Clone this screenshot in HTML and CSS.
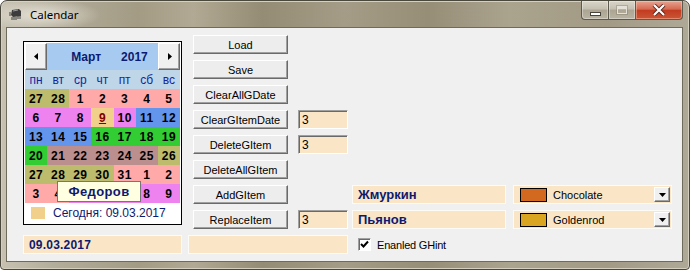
FILE: index.html
```html
<!DOCTYPE html>
<html lang="ru">
<head>
    <meta charset="UTF-8">
    <title>Calendar</title>
    <link rel="stylesheet" href="styles.css">
</head>
<body>

    <div id="window">

        <div id="titlebar">
            <svg class="app-icon" width="14" height="13" viewBox="0 0 14 13">
                <path d="M3 2 L10 1 L12 3 L12 8 L4 9 L2 7 Z" fill="#3c3c3c"/>
                <path d="M3 9 L3 12 M5 9 L5 12 M7 9 L7 12 M9 8 L9 11 M11 8 L11 11 M1 4 L1 8" stroke="#3c3c3c" stroke-width="1"/>
                <path d="M4 3 L9 2" stroke="#9a9a9a" stroke-width="1"/>
            </svg>
            <span class="title">Calendar</span>
            <div class="caption-buttons">
                <div class="cap-btn cap-min"><span class="min-bar"></span></div>
                <div class="cap-btn cap-max"><span class="max-box"></span></div>
                <div class="cap-btn cap-close">
                    <svg width="14" height="12" viewBox="0 0 14 12">
                        <path d="M2 1 L12 11 M12 1 L2 11" stroke="#5a2a20" stroke-width="4"/>
                        <path d="M2 1 L12 11 M12 1 L2 11" stroke="#fff" stroke-width="2.2"/>
                    </svg>
                </div>
            </div>
        </div>

        <div id="client">

            <div class="left-col">
                <div id="calendar">
                    <div class="cal-head">
                        <button class="cal-nav" type="button">
                            <svg width="5" height="7" viewBox="0 0 5 7"><path d="M4 0 L4 7 L0 3.5 Z" fill="#000"/></svg>
                        </button>
                        <div class="cal-month"><span>Март</span><span>2017</span></div>
                        <button class="cal-nav" type="button">
                            <svg width="5" height="7" viewBox="0 0 5 7"><path d="M1 0 L1 7 L5 3.5 Z" fill="#000"/></svg>
                        </button>
                    </div>
                    <div class="cal-days">
                        <span>пн</span><span>вт</span><span>ср</span><span>чт</span><span>пт</span><span>сб</span><span>вс</span>
                    </div>
                    <div class="cal-grid">
                        <span class="khaki">27</span><span class="khaki">28</span><span class="pink">1</span><span class="pink">2</span><span class="pink">3</span><span class="pink">4</span><span class="pink">5</span>
                        <span class="violet">6</span><span class="violet">7</span><span class="violet">8</span><span class="today">9</span><span class="violet">10</span><span class="blue">11</span><span class="blue">12</span>
                        <span class="blue">13</span><span class="blue">14</span><span class="blue">15</span><span class="green">16</span><span class="green">17</span><span class="green">18</span><span class="green">19</span>
                        <span class="green">20</span><span class="rosy">21</span><span class="rosy">22</span><span class="rosy">23</span><span class="rosy">24</span><span class="rosy">25</span><span class="khaki">26</span>
                        <span class="khaki">27</span><span class="khaki">28</span><span class="khaki">29</span><span class="khaki">30</span><span class="pink">31</span><span class="pink">1</span><span class="pink">2</span>
                        <span class="pink">3</span><span class="pink">4</span><span class="violet">5</span><span class="violet">6</span><span class="violet">7</span><span class="violet">8</span><span class="violet">9</span>
                    </div>
                    <div class="cal-today">
                        <span class="today-swatch"></span>
                        <span>Сегодня: 09.03.2017</span>
                    </div>
                    <!-- hint shown over the hovered day -->
                    <div class="hint">Федоров</div>
                </div>
                <div class="edit edit-flat edit-date">09.03.2017</div>
            </div>

            <div class="mid-col">
                <div class="btn-row"><button class="btn" type="button">Load</button></div>
                <div class="btn-row"><button class="btn" type="button">Save</button></div>
                <div class="btn-row"><button class="btn" type="button">ClearAllGDate</button></div>
                <div class="btn-row">
                    <button class="btn" type="button">ClearGItemDate</button>
                    <div class="edit edit-sunken">3</div>
                </div>
                <div class="btn-row">
                    <button class="btn" type="button">DeleteGItem</button>
                    <div class="edit edit-sunken">3</div>
                </div>
                <div class="btn-row"><button class="btn" type="button">DeleteAllGItem</button></div>
                <div class="btn-row"><button class="btn" type="button">AddGItem</button></div>
                <div class="btn-row">
                    <button class="btn" type="button">ReplaceItem</button>
                    <div class="edit edit-sunken">3</div>
                </div>
                <div class="edit edit-flat edit-wide"></div>
            </div>

            <div class="right-col">
                <div class="field-row">
                    <div class="edit edit-flat edit-name">Жмуркин</div>
                    <div class="combo">
                        <span class="combo-swatch" style="background: #d2691e;"></span>
                        <span class="combo-text">Chocolate</span>
                        <span class="combo-drop">
                            <svg width="7" height="4" viewBox="0 0 7 4"><path d="M0 0 L7 0 L3.5 4 Z" fill="#000"/></svg>
                        </span>
                    </div>
                </div>
                <div class="field-row">
                    <div class="edit edit-flat edit-name">Пьянов</div>
                    <div class="combo">
                        <span class="combo-swatch" style="background: #daa520;"></span>
                        <span class="combo-text">Goldenrod</span>
                        <span class="combo-drop">
                            <svg width="7" height="4" viewBox="0 0 7 4"><path d="M0 0 L7 0 L3.5 4 Z" fill="#000"/></svg>
                        </span>
                    </div>
                </div>
                <div class="field-row check-row">
                    <span class="checkbox">
                        <svg width="9" height="9" viewBox="0 0 9 9"><path d="M1 4 L3.5 6.5 L8 1.5" stroke="#000" stroke-width="2" fill="none"/></svg>
                    </span>
                    <span class="check-label">Enanled GHint</span>
                </div>
            </div>

        </div>

    </div>

</body>
</html>
```

FILE: styles.css
```css
* {
    margin: 0px;
    padding: 0px;
    box-sizing: border-box;
}
html, body {
    width: 100%;
    height: 100%;
    background: #fff;
}
body {
    font-family: "Liberation Sans", Arial, sans-serif;
    font-size: 11px;
    color: #000;
}
button {
    font-family: inherit;
}

/* window frame */
#window {
    width: 690px;
    height: 270px;
    border: 1px solid #4a473d;
    border-radius: 7px 7px 4px 4px;
    background: linear-gradient(90deg, #c6c1b1 0%, #b2ac9a 8%, #a39b84 20%, #b1a993 28%, #958c75 38%, #a49c86 50%, #978e77 62%, #aaa38e 74%, #a29a85 88%, #aea897 100%);
    box-shadow: inset 0 0 0 1px #d4cfbf;
    display: flex;
    flex-direction: column;
    overflow: hidden;
}
#titlebar {
    height: 27px;
    display: flex;
    align-items: flex-start;
    padding-left: 8px;
    background: radial-gradient(ellipse 60px 16px at 40px 14px, rgba(235, 232, 222, 0.85), rgba(235, 232, 222, 0));
}
.app-icon {
    margin-top: 7px;
}
.title {
    font-family: "Noto Sans", sans-serif;
    font-size: 11.5px;
    line-height: 14px;
    margin-top: 7px;
    margin-left: 7px;
    color: #000;
}
.caption-buttons {
    margin-left: auto;
    margin-right: 6px;
    display: flex;
}
.cap-btn {
    height: 19px;
    border: 1px solid #5c594e;
    border-top: none;
    display: flex;
    align-items: center;
    justify-content: center;
}
.cap-min, .cap-max {
    width: 27px;
    background: linear-gradient(#d9d5c9, #c4bfb0 45%, #aca592 50%, #b9b3a3);
    box-shadow: inset 0 0 0 1px rgba(255, 255, 255, 0.35);
}
.cap-min {
    border-radius: 0 0 0 4px;
    border-right: none;
}
.cap-max {
    border-right: none;
}
.cap-close {
    width: 48px;
    border-radius: 0 0 4px 0;
    background: linear-gradient(#e7a493, #d66a50 45%, #c23c22 52%, #cc5535);
    box-shadow: inset 0 0 0 1px rgba(255, 220, 200, 0.4);
}
.min-bar {
    width: 11px;
    height: 4px;
    margin-top: 7px;
    background: #fff;
    border: 1px solid #47443b;
}
.max-box {
    width: 10px;
    height: 8px;
    border: 1px solid #e4e1d8;
    box-shadow: inset 0 2px 0 #e4e1d8, 0 0 0 1px rgba(120, 115, 100, 0.35);
}

/* client area */
#client {
    margin: 0 7px 0 6px;
    width: 675px;
    height: 233px;
    background: #f0f0f0;
    box-shadow: 0 0 0 1px #6e6a5c;
    display: flex;
    padding: 7px 0 0 16px;
}
.left-col {
    width: 159px;
    display: flex;
    flex-direction: column;
}
.mid-col {
    width: 160px;
    margin-left: 6px;
    display: flex;
    flex-direction: column;
    gap: 6px;
}
.right-col {
    margin-left: 4px;
    padding-top: 150px;
    display: flex;
    flex-direction: column;
    gap: 6px;
}

/* calendar */
#calendar {
    position: relative;
    width: 159px;
    height: 184px;
    margin-top: 6px;
    border: 1px solid #000;
    padding: 1px;
    background: #fff;
    display: flex;
    flex-direction: column;
}
.cal-head {
    height: 27px;
    background: #a6caf0;
    display: flex;
    align-items: stretch;
}
.cal-nav {
    width: 22px;
    border: 1px solid;
    border-color: #fff #6a6a6a #6a6a6a #fff;
    box-shadow: inset -1px -1px 0 #a0a0a0;
    background: #f0f0f0;
    display: flex;
    align-items: center;
    justify-content: center;
}
.cal-month {
    flex: 1;
    display: flex;
    align-items: center;
    justify-content: center;
    gap: 20px;
    padding-left: 14px;
    font-size: 12px;
    font-weight: bold;
    color: #0c1a70;
}
.cal-days {
    height: 19px;
    background: #bed6e8;
    display: grid;
    grid-template-columns: repeat(7, 1fr);
    align-items: center;
    text-align: center;
    font-size: 12px;
    color: #1525a0;
}
.cal-grid {
    display: grid;
    grid-template-columns: repeat(7, 1fr);
    grid-auto-rows: 19px;
}
.cal-grid span {
    display: flex;
    align-items: center;
    justify-content: center;
    font-size: 12px;
    font-weight: bold;
    letter-spacing: 0.5px;
    color: #000;
}
.khaki  { background: #bdbb6c; }
.pink   { background: #ffa9a9; }
.violet { background: #ee82ee; }
.blue   { background: #6495ed; }
.green  { background: #32cd32; }
.rosy   { background: #bc8f8f; }
.cal-grid .today {
    background: #f1d08c;
    color: #800000;
    text-decoration: underline;
}
.cal-today {
    height: 20px;
    display: flex;
    align-items: center;
    padding-left: 6px;
    gap: 8px;
    font-size: 12px;
    color: #0c1a70;
}
.today-swatch {
    width: 14px;
    height: 12px;
    background: #f1d08c;
}
.hint {
    position: absolute;
    left: 33px;
    top: 139px;
    width: 84px;
    height: 21px;
    background: #ffffe1;
    border: 1px solid #767676;
    display: flex;
    align-items: center;
    justify-content: center;
    font-size: 13px;
    font-weight: bold;
    letter-spacing: 0.4px;
    color: #0c1a70;
}

/* edits */
.edit {
    height: 19px;
    background: #fae6c6;
    display: flex;
    align-items: center;
    font-size: 12px;
}
.edit-flat {
    border: 1px solid #fdfbf5;
    padding-left: 5px;
}
.edit-sunken {
    width: 50px;
    margin-left: 10px;
    border: 1px solid;
    border-color: #a0a0a0 #fff #fff #a0a0a0;
    box-shadow: inset 1px 1px 0 #696969;
    padding-left: 3px;
}
.edit-date {
    width: 159px;
    margin-top: 10px;
    font-weight: bold;
    letter-spacing: 0.2px;
    color: #0c1a70;
}
.edit-wide {
    width: 160px;
}
.edit-name {
    width: 154px;
    font-size: 13px;
    font-weight: bold;
    color: #0c1a70;
}

/* buttons */
.btn-row {
    height: 19px;
    display: flex;
}
.btn {
    width: 95px;
    height: 19px;
    margin-left: 5px;
    border: 1px solid;
    border-color: #fff #6a6a6a #6a6a6a #fff;
    box-shadow: inset -1px -1px 0 #a0a0a0;
    background: #ededed;
    font-size: 11px;
    color: #000;
}

/* right side */
.field-row {
    height: 19px;
    display: flex;
    align-items: center;
}
.combo {
    width: 159px;
    height: 19px;
    margin-left: 7px;
    background: #fae6c6;
    border: 1px solid #fdfbf5;
    display: flex;
    align-items: center;
    padding-left: 6px;
}
.combo-swatch {
    width: 27px;
    height: 14px;
    border: 1px solid #000;
}
.combo-text {
    margin-left: 6px;
    font-size: 11px;
}
.combo-drop {
    margin-left: auto;
    margin-right: 1px;
    width: 16px;
    height: 15px;
    border: 1px solid;
    border-color: #fff #6a6a6a #6a6a6a #fff;
    box-shadow: inset -1px -1px 0 #a0a0a0;
    background: #f0f0f0;
    display: flex;
    align-items: center;
    justify-content: center;
}
.check-row {
    padding-left: 6px;
}
.checkbox {
    width: 13px;
    height: 13px;
    background: #fff;
    border: 1px solid;
    border-color: #a0a0a0 #fff #fff #a0a0a0;
    box-shadow: inset 1px 1px 0 #696969;
    display: flex;
    align-items: center;
    justify-content: center;
}
.check-label {
    margin-left: 6px;
    font-size: 11px;
    letter-spacing: -0.2px;
}
```
